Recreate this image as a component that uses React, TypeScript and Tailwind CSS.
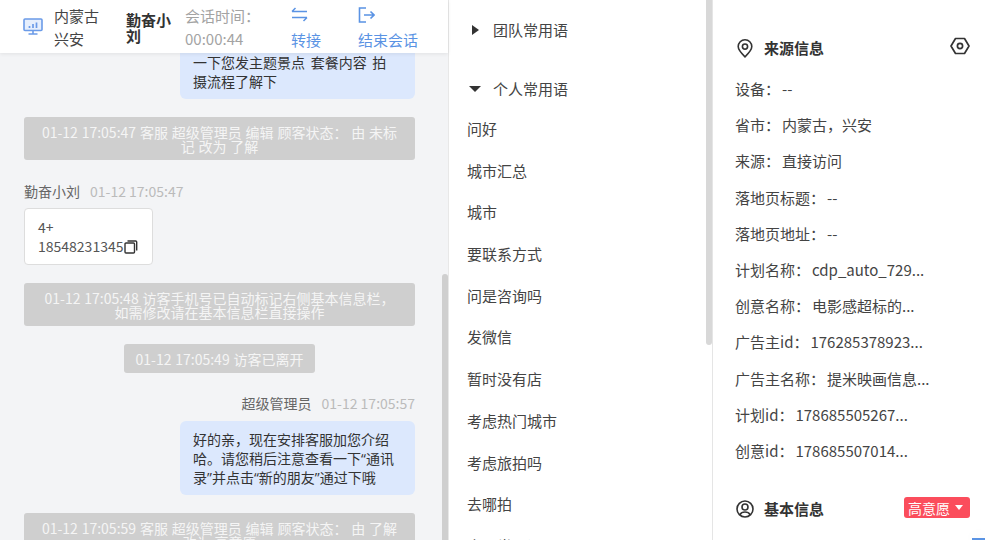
const FONT = "font-['Noto_Sans_CJK_SC',sans-serif]"

const phrases = ["问好", "城市汇总", "城市", "要联系方式", "问是咨询吗", "发微信", "暂时没有店", "考虑热门城市", "考虑旅拍吗", "去哪拍", "人员常用语"]

const sourceRows = [
    ["设备：", "--"],
    ["省市：", "内蒙古，兴安"],
    ["来源：", "直接访问"],
    ["落地页标题：", "--"],
    ["落地页地址：", "--"],
    ["计划名称：", "cdp_auto_729..."],
    ["创意名称：", "电影感超标的..."],
    ["广告主id：", "176285378923..."],
    ["广告主名称：", "提米映画信息..."],
    ["计划id：", "178685505267..."],
    ["创意id：", "178685507014..."],
]

const SystemMsg = ({ text, small }: { text: string; small?: boolean }) => (
    <div className={`bg-[#cfcfcf] text-[#f5f5f5] text-center text-sm leading-[14px] [word-spacing:0.7px] rounded-[3px] py-[7.5px] ${small ? "self-center px-[11.5px]" : "px-[17px]"}`}>
        {text}
    </div>
)

const Chat = () => (
    <div className="flex-1 overflow-hidden relative">
        <div className="flex flex-col gap-[18px] pl-6 pr-[33px] mt-[-28px]">
            <div className="self-end w-[235px] bg-[#dce8fd] rounded-md pl-[13px] pr-[22px] py-[8.5px] text-sm leading-[19px] [word-spacing:2.5px] text-[#333]">
                <div className="h-[19px]"></div>
                一下您发主题景点 套餐内容 拍摄流程了解下
            </div>
            <SystemMsg text="01-12 17:05:47 客服 超级管理员 编辑 顾客状态： 由 未标记 改为 了解" />
            <div className="flex flex-col gap-[7px] mt-[4px]">
                <div className="text-sm leading-[19px] flex gap-[10px]">
                    <span className="text-[#666]">勤奋小刘</span>
                    <span className="text-[#bbb]">01-12 17:05:47</span>
                </div>
                <div className="w-[129px] h-[57px] bg-white border border-[#ddd] rounded-[4px] pl-[13px] pt-[9px] text-sm leading-[19px] text-[#555]">
                    <div>4+</div>
                    <div className="flex items-center">
                        18548231345
                        <svg width="14" height="14" viewBox="0 0 14 14" fill="none" stroke="#333" strokeWidth="1.4" className="ml-[1px]">
                            <rect x="1" y="3" width="9.5" height="10" rx="1" />
                            <path d="M3.5 1h8.2a1 1 0 0 1 1 1v8.5" />
                        </svg>
                    </div>
                </div>
            </div>
            <SystemMsg text="01-12 17:05:48 访客手机号已自动标记右侧基本信息栏，如需修改请在基本信息栏直接操作" />
            <SystemMsg small text="01-12 17:05:49 访客已离开" />
            <div className="flex flex-col gap-[8px] mt-[3px]">
                <div className="text-sm leading-[19px] flex justify-end gap-[10px]">
                    <span className="text-[#666]">超级管理员</span>
                    <span className="text-[#bbb]">01-12 17:05:57</span>
                </div>
                {/* quotes stay narrow with Open Sans first */}
                <div className="self-end w-[235px] bg-[#dce8fd] rounded-md pl-[13px] pr-[15px] py-[8.5px] text-sm leading-[19px] text-[#333] font-['Open_Sans','Noto_Sans_CJK_SC',sans-serif]">
                    好的亲，现在安排客服加您介绍哈。请您稍后注意查看一下“通讯录”并点击“新的朋友”通过下哦
                </div>
            </div>
            <SystemMsg text="01-12 17:05:59 客服 超级管理员 编辑 顾客状态： 由 了解 改为 高意愿" />
        </div>
        {/* scrollbar */}
        <div className="absolute right-0 top-[221px] bottom-0 w-[6px] bg-[#cfcfcf] rounded-t-[3px]"></div>
    </div>
)

const Header = () => (
    <div className="h-[53px] shrink-0 bg-white shadow-[0_1px_4px_rgba(0,0,0,0.08)] relative z-10 flex text-[15px]">
        <div className="w-[54px] flex items-center pl-[23px] pb-[1px]">
            <svg width="20" height="17" viewBox="0 0 20 17" fill="none" stroke="#6b9be8" strokeWidth="1.6">
                <rect x="1" y="1" width="18" height="11.5" rx="1" fill="#e6effd" />
                <path d="M10 12.5v3.5M5.5 16h9" />
                <path d="M6.5 10V8M10 10V6M13.5 10V4.5" strokeWidth="1.7" />
            </svg>
        </div>
        <div className="w-[60px] mt-[4px] leading-[23px] text-[#444]">
            <div>内蒙古</div>
            <div>兴安</div>
        </div>
        <div className="w-[59px] ml-[12px] mt-[12px] leading-[16px] font-bold text-[#333]">
            <div>勤奋小</div>
            <div>刘</div>
        </div>
        <div className="w-[106px] mt-[4px] leading-[23px] text-[#a3a3a3]">
            <div>会话时间：</div>
            <div>00:00:44</div>
        </div>
        <div className="w-[67px] flex flex-col text-[#5a93e4] leading-[23px] pt-[5px]">
            <svg width="17" height="15" viewBox="0 0 17 15" fill="none" stroke="#5a93e4" strokeWidth="1.5" className="mt-[2px] mb-[5.5px]">
                <path d="M1 4.5h15M1 4.5l3.5-3.5M16 10.5H1M16 10.5l-3.5 3.5" />
            </svg>
            <span>转接</span>
        </div>
        <div className="flex flex-col text-[#5a93e4] leading-[23px] pt-[5px]">
            <svg width="17" height="16" viewBox="0 0 17 16" fill="none" stroke="#5a93e4" strokeWidth="1.6" className="mt-[2px] mb-[4.5px]">
                <path d="M8 1H1.5v14H8M6 8h10M12.5 4.5 16 8l-3.5 3.5" />
            </svg>
            <span>结束会话</span>
        </div>
    </div>
)

const Phrases = () => (
    <div className="w-[264px] shrink-0 border-r border-[#e5e5e5] overflow-hidden relative text-[15px] text-[#444]">
        <div className="flex items-center h-[20px] mt-5 ml-[23px]">
            <span className="w-0 h-0 border-y-[5px] border-y-transparent border-l-[7px] border-l-[#333]"></span>
            <span className="ml-[14px]">团队常用语</span>
        </div>
        <div className="flex items-center h-[20px] mt-[39px] ml-[20px]">
            <span className="w-0 h-0 border-x-[6px] border-x-transparent border-t-[6px] border-t-[#333]"></span>
            <span className="ml-[12px]">个人常用语</span>
        </div>
        <div className="flex flex-col gap-[21.7px] ml-[18px] mt-[20px]">
            {phrases.map((p) => (
                <div key={p} className="h-[20px] leading-[20px]">{p}</div>
            ))}
        </div>
        <div className="absolute right-0 top-0 h-[345px] w-[6px] bg-[#d8d8d8] rounded-b-[3px]"></div>
    </div>
)

const SourceInfo = () => (
    <div className="flex-1 min-w-0 pl-[22px] pr-[15px] text-[15px] text-[#444] overflow-hidden">
        <div className="flex items-center mt-[38px] h-5">
            <svg width="18" height="19" viewBox="0 0 18 19" fill="none" stroke="#333" strokeWidth="1.6" className="ml-[1px]">
                <path d="M9 17.8C5.5 14.5 2.2 11.2 2.2 7.6a6.8 6.8 0 0 1 13.6 0c0 3.6-3.3 6.9-6.8 10.2z" strokeLinejoin="round" />
                <circle cx="9" cy="7.6" r="2.6" />
            </svg>
            <span className="ml-[10px] font-bold text-[#333]">来源信息</span>
            <svg width="20" height="18" viewBox="0 0 20 18" fill="none" stroke="#333" strokeWidth="1.7" className="ml-auto mt-[-5px]">
                <path d="M5.5 1.5h9L19 9l-4.5 7.5h-9L1 9z" strokeLinejoin="round" />
                <circle cx="10" cy="9" r="2.6" />
            </svg>
        </div>
        <div className="flex flex-col gap-[16.2px] mt-[21px]">
            {sourceRows.map(([label, value]) => (
                <div key={label} className="h-5 leading-5 whitespace-nowrap">
                    <span className="mr-[2px]">{label}</span>
                    {value}
                </div>
            ))}
        </div>
        <div className="flex items-center mt-[38px] h-5">
            <svg width="18" height="18" viewBox="0 0 18 18" fill="none" stroke="#333" strokeWidth="1.6" className="ml-[1px]">
                <circle cx="9" cy="9" r="8" />
                <circle cx="9" cy="7" r="3" />
                <path d="M3.8 14.8C5 12.6 6.8 12 9 12s4 .6 5.2 2.8" />
            </svg>
            <span className="ml-[10px] font-bold text-[#333]">基本信息</span>
            <div className="ml-auto h-[21px] w-[66px] mt-[-2px] bg-[#fb4d5c] rounded-[3px] text-white text-sm flex items-center pl-[4px] gap-[5px]">
                高意愿
                <span className="w-0 h-0 border-x-[4px] border-x-transparent border-t-[5px] border-t-white"></span>
            </div>
        </div>
    </div>
)

export default function App() {
    return (
        <div className={`${FONT} relative w-[985px] h-[540px] flex overflow-hidden bg-white`}>
            <div className="w-[449px] shrink-0 bg-[#f3f4f6] flex flex-col border-r border-[#e8e8e8]">
                <Header />
                <Chat />
            </div>
            <Phrases />
            <SourceInfo />
            {/* floating button, only its top edge is on screen */}
            <div className="absolute right-0 bottom-0 w-[13px] h-[2px] bg-[#5a93e4] shadow-[0_0_14px_rgba(0,0,0,0.12)]"></div>
        </div>
    )
}
